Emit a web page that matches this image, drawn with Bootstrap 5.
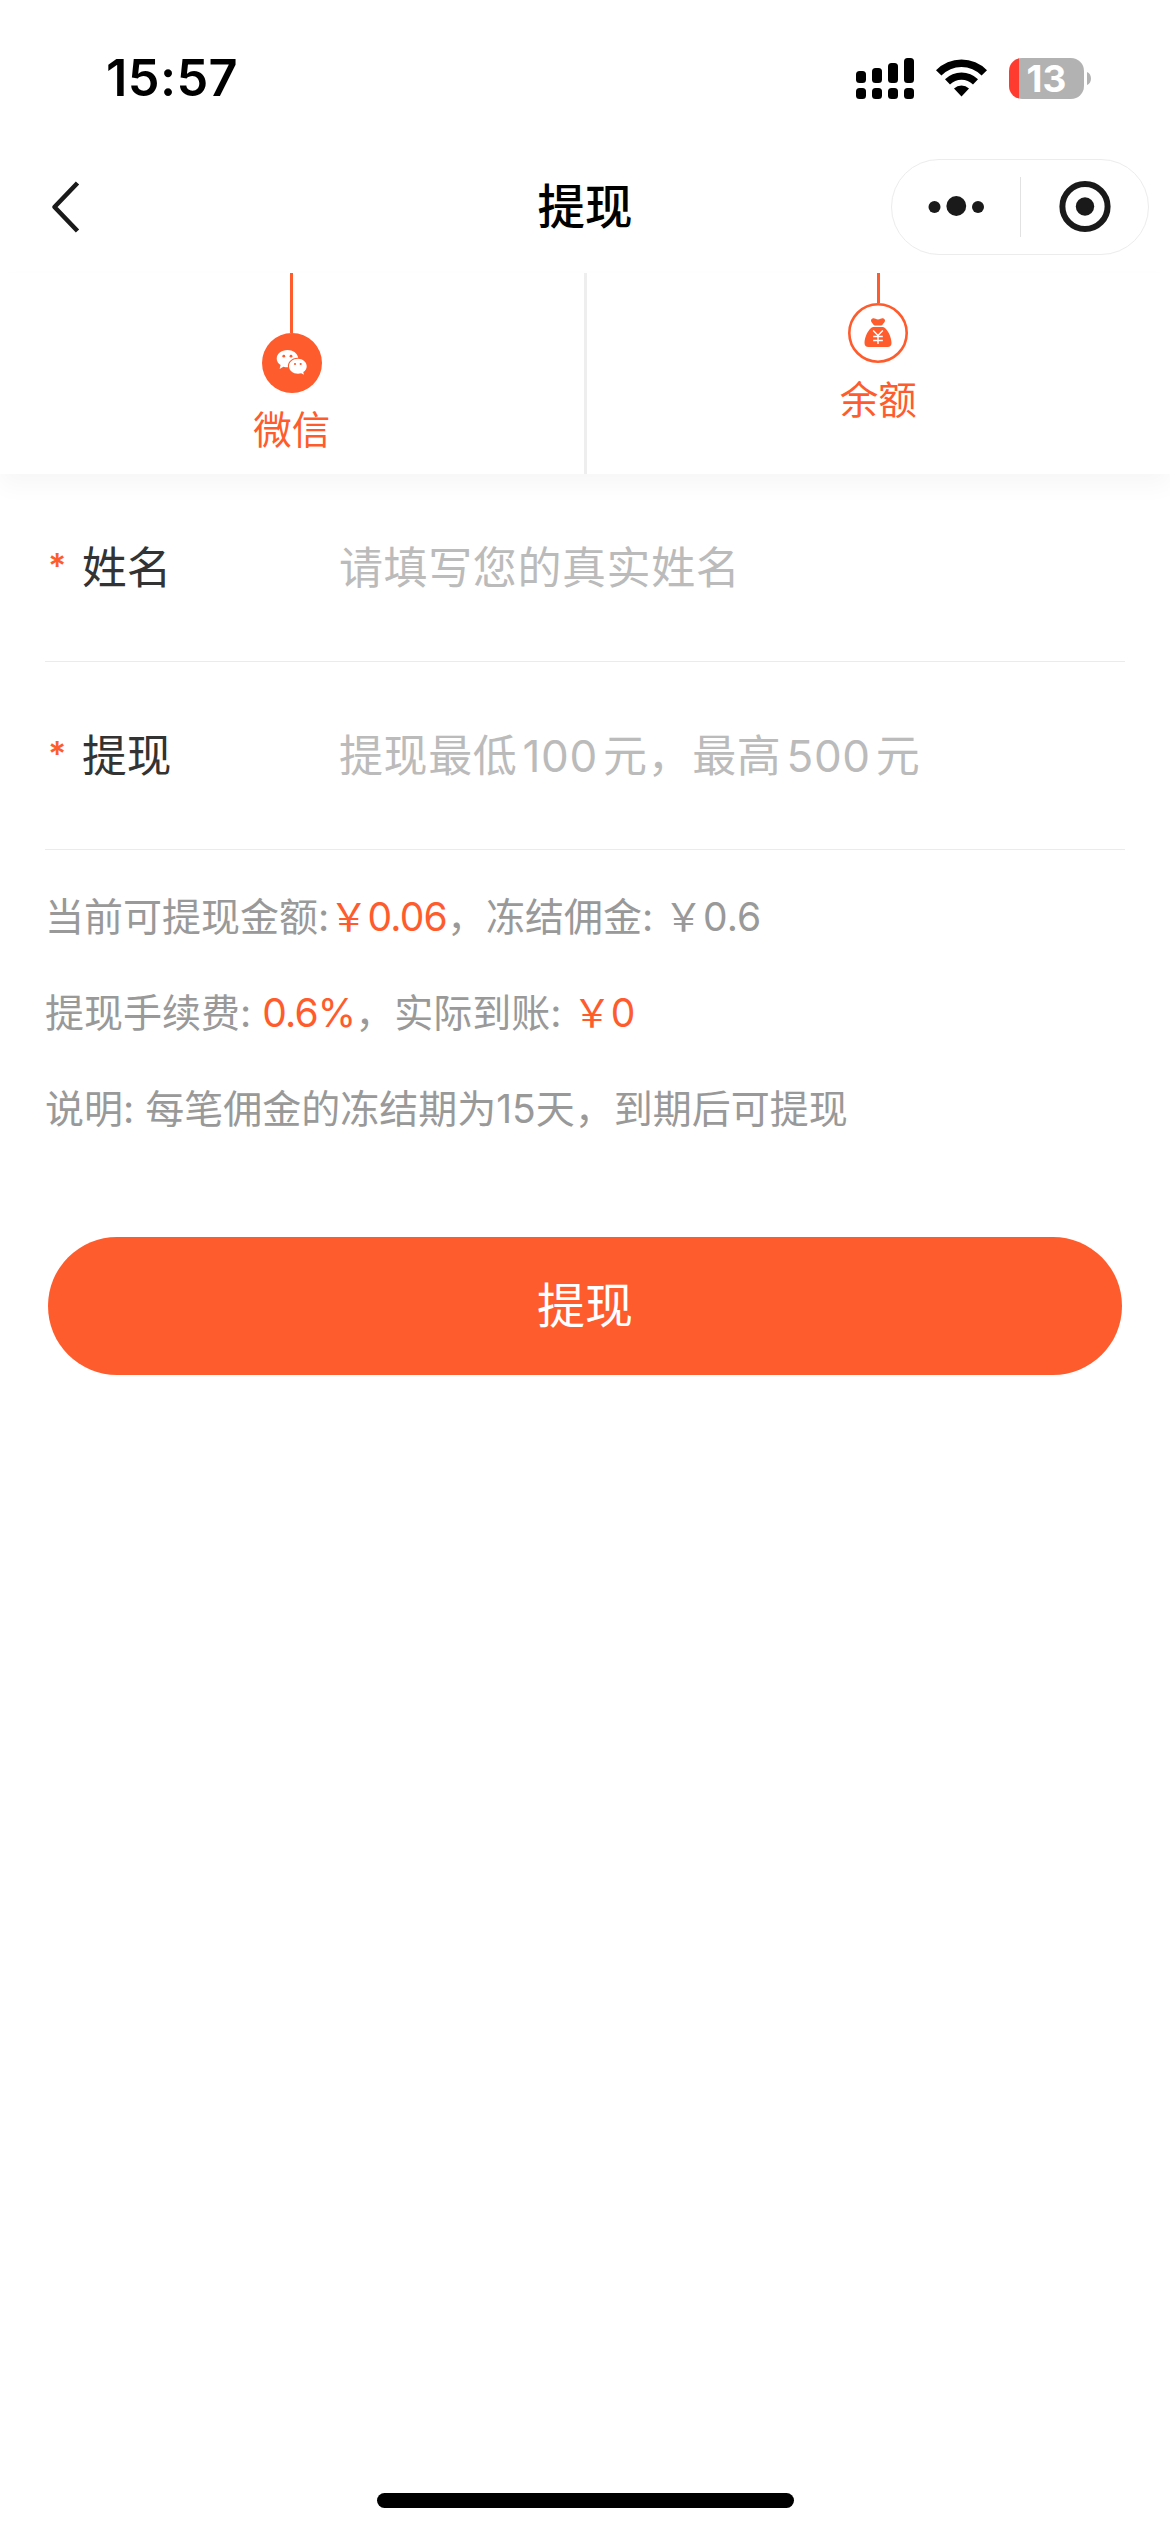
<!DOCTYPE html>
<html lang="zh-CN">
<head>
<meta charset="utf-8">
<meta name="viewport" content="width=device-width, initial-scale=1">
<title>提现</title>
<link href="https://cdn.jsdelivr.net/npm/bootstrap@5.3.0/dist/css/bootstrap.min.css" rel="stylesheet">
<style>
:root{--brand:#ff5c2e}
body{font-family:Inter,"Noto Sans CJK SC",sans-serif;background:#fff;color:#333;font-size:39px;line-height:1.2}
.screen{height:2532px}
.statusbar{height:156px;padding-left:106px;padding-right:79px;color:#000}
.clock{font-size:50.5px;font-weight:600;line-height:60px;letter-spacing:.4px}
.status-icons .wifi{margin:0 22px}
.status-icons .nub{margin-left:3px}
.battery{font-size:37px;font-weight:700;width:75px;height:41px;border-radius:13px;color:#fff;background:linear-gradient(90deg,#ff3b30 10px,#b2b2b2 10px);line-height:41px}
.topnav{height:117px;padding:3px 21px 18px}
.side{width:258px;padding-left:29px}
.title{font-size:47.5px;font-weight:500;color:#000;line-height:60px}
.capsule{width:258px;height:96px;border:1px solid #ececec}
.tabs{height:201px;background:#fff;box-shadow:0 12px 22px rgba(0,0,0,.035)}
.tab-line{width:3px;background:var(--brand)}
.vsep{width:3px;background:#eee}
.tab-icon{width:60px;height:60px}
.accent{color:var(--brand)}
.tab-name{font-size:38.5px;line-height:48px;margin-top:13px}
.form-area{padding:0 45px}
.field{height:188px;border-bottom:1px solid #ebebeb}
.star{width:37px;padding-left:3px;font-size:34px;font-weight:600;line-height:40px;margin-top:-3px}
.field-name{width:257px;font-size:44.7px;line-height:60px}
.field .form-control{font-size:44px;line-height:60px;letter-spacing:.6px;word-spacing:-7.8px;color:#333}
.field .form-control::placeholder{color:#bbb;opacity:1}
.notes{margin:19px 45px 0;color:#999}
.notes p{line-height:96px;font-size:39px;white-space:pre}
.notes .accent{letter-spacing:-.8px}
.submit{margin:80px 48px 0;height:138px;font-size:48px;line-height:136px;background:var(--brand);color:#fff}
.homebar{width:417px;height:15px;background:#000;margin-bottom:24px}
</style>
</head>
<body>
<div class="screen d-flex flex-column">
  <header class="statusbar d-flex align-items-center justify-content-between">
    <div class="clock">15:57</div>
    <div class="status-icons d-flex align-items-center">
      <svg width="58" height="41" viewBox="0 0 58 41"><g fill="#000"><rect x="0" y="13" width="10" height="12" rx="3.5"/><rect x="16" y="10" width="10" height="15" rx="3.5"/><rect x="32" y="5" width="10" height="20" rx="3.5"/><rect x="48" y="0" width="10" height="25" rx="3.5"/><rect x="0" y="30" width="10" height="11" rx="3.5"/><rect x="16" y="30" width="10" height="11" rx="3.5"/><rect x="32" y="30" width="10" height="11" rx="3.5"/><rect x="48" y="30" width="10" height="11" rx="3.5"/></g></svg>
      <svg class="wifi" width="51" height="38" viewBox="0 0 51 38"><path d="M0 11.200A35.500 35.500 0 0 1 51 11.200L45.600 16.600A28 28 0 0 0 5.400 16.600ZM9 20.200A23.500 23.500 0 0 1 42 20.200L37 25.400A16.500 16.500 0 0 0 14 25.400ZM18 29.500A11 11 0 0 1 33 29.500L25.500 37.500Z"/></svg>
      <div class="battery text-center">13</div>
      <svg class="nub" width="4" height="13" viewBox="0 0 4 13"><path fill="#b2b2b2" d="M0 0C5.300 2 5.300 11 0 13Z"/></svg>
    </div>
  </header>
  <nav class="topnav d-flex align-items-center justify-content-between">
    <div class="side"><svg class="d-block" width="32" height="54" viewBox="0 0 32 54"><path d="M27.500 3L4.500 27L27.500 51" fill="none" stroke="#1a1a1a" stroke-width="4.600" stroke-linejoin="round"/></svg></div>
    <div class="title">提现</div>
    <div class="capsule rounded-pill">
      <svg width="256" height="94" viewBox="0 0 256 94" class="d-block"><g fill="#1a1a1a"><circle cx="42.500" cy="47" r="6"/><circle cx="64.300" cy="46" r="9.900"/><circle cx="86" cy="47" r="6"/><circle cx="193" cy="46.500" r="9.200"/></g><circle cx="193" cy="46.500" r="22.600" fill="none" stroke="#1a1a1a" stroke-width="6"/><path d="M128.500 17v60" stroke="#e2e2e2"/></svg>
    </div>
  </nav>
  <section class="tabs d-flex">
    <div class="flex-fill w-50 d-flex flex-column align-items-center accent">
      <div class="tab-line" style="height:60px"></div>
      <svg class="tab-icon" viewBox="0 0 60 60"><circle cx="30" cy="30" r="30" fill="#ff5c2e"/><path fill="#fff" d="M25.500 17C19.300 17 14.700 20.700 14.700 25.500c0 2.800 1.400 4.900 3.900 6.600l-1 3.800 3.800-2.200c1.300.4 2.600.6 4.600.6-.9-5.300 4-9.900 10.200-9.600C35.300 20 30.800 17 25.500 17Z"/><path fill="#fff" d="M36 25.700c-5.100 0-9 3.400-9 7.500 0 4.200 3.900 7.500 9 7.500 1.200 0 2.300-.2 3.200-.5l2.700 1.600-.6-2.700c2.200-1.500 3.400-3.500 3.400-5.900 0-4.100-4-7.500-8.700-7.500Z"/><g fill="#ff5c2e"><circle cx="21.800" cy="23.200" r="1.400"/><circle cx="29" cy="23.200" r="1.400"/><circle cx="33" cy="31" r="1.100"/><circle cx="38.700" cy="31" r="1.100"/></g></svg>
      <div class="tab-name">微信</div>
    </div>
    <div class="vsep"></div>
    <div class="flex-fill w-50 d-flex flex-column align-items-center accent">
      <div class="tab-line" style="height:30px"></div>
      <svg class="tab-icon" viewBox="0 0 60 60"><circle cx="30" cy="30" r="28.700" fill="#fff" stroke="#ff5c2e" stroke-width="2.600"/><path fill="#ff5c2e" d="M23 17c1-2 3-2 4.500-1.200 1.700.9 3.300.9 5 0C34 15 36 15 37 17c.4 1.500-1.500 3.300-2.500 4.700-.3.600-.8.800-1.500.8h-6c-.7 0-1.200-.2-1.500-.8C24.500 20.300 22.600 18.500 23 17ZM25 24h10c4.500 1.500 8.500 10 8.500 16 0 2.500-1.500 4-4 4h-19c-2.500 0-4-1.500-4-4 0-6 4-14.500 8.500-16Z"/><path d="M25.200 27.500l4.800 5 4.800-5M25.200 33.500h9.600M25.200 37.500h9.600M30 32.500v8.500" fill="none" stroke="#fff" stroke-width="1.400"/></svg>
      <div class="tab-name">余额</div>
    </div>
  </section>
  <form class="form-area">
    <div class="field d-flex align-items-center">
      <span class="star accent flex-shrink-0">*</span><label class="field-name flex-shrink-0" for="realname">姓名</label>
      <input id="realname" class="form-control border-0 p-0 shadow-none bg-transparent" placeholder="请填写您的真实姓名">
    </div>
    <div class="field d-flex align-items-center">
      <span class="star accent flex-shrink-0">*</span><label class="field-name flex-shrink-0" for="amount">提现</label>
      <input id="amount" class="form-control border-0 p-0 shadow-none bg-transparent" placeholder="提现最低 100 元，最高 500 元">
    </div>
  </form>
  <div class="notes">
    <p class="mb-0">当前可提现金额:<span class="accent">￥0.06</span>，冻结佣金: ￥0.6</p>
    <p class="mb-0">提现手续费: <span class="accent">0.6%</span>，实际到账: <span class="accent">￥0</span></p>
    <p class="mb-0">说明: 每笔佣金的冻结期为15天，到期后可提现</p>
  </div>
  <button type="button" class="btn submit rounded-pill border-0 p-0">提现</button>
  <div class="homebar rounded-pill mt-auto mx-auto"></div>
</div>
<script src="https://cdn.jsdelivr.net/npm/bootstrap@5.3.0/dist/js/bootstrap.bundle.min.js"></script>
</body>
</html>
